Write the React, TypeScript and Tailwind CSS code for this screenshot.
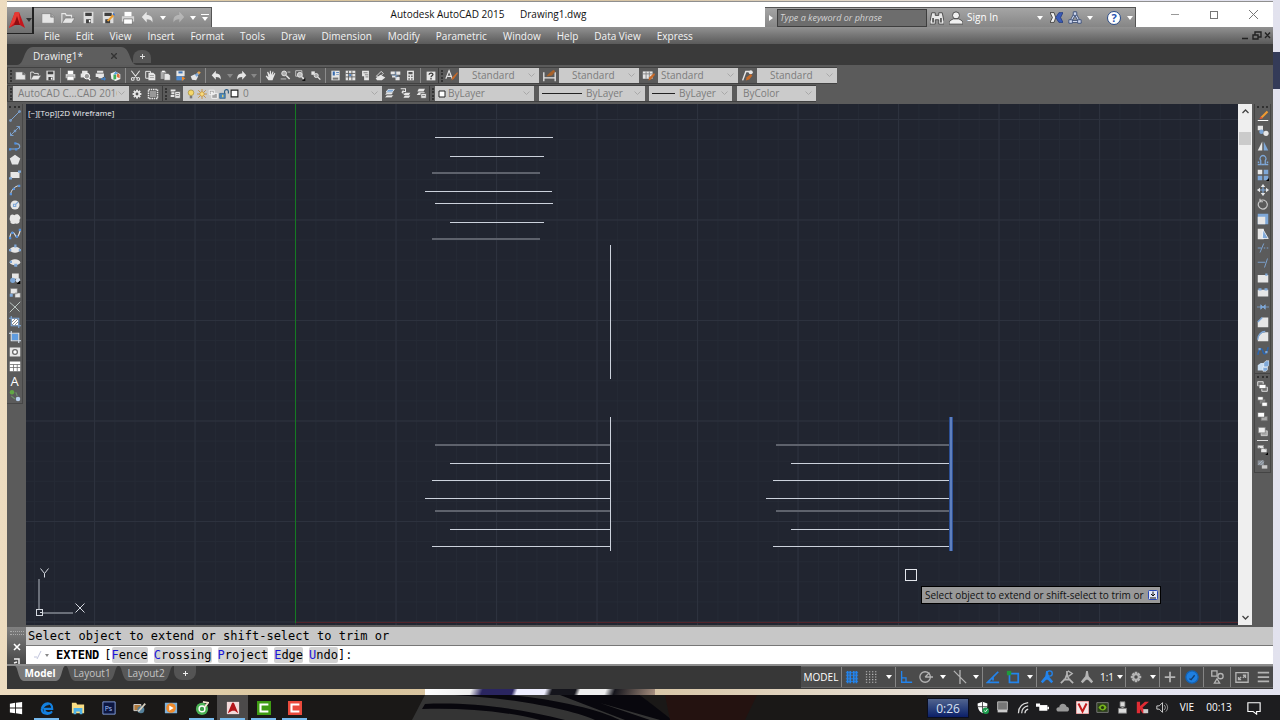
import type { ReactNode } from "react";

const W = "#e6e6e6";
const B = "#7fa8d8";
const D = "#3f3f3f";

function Svg({ size = 13, children }: { size?: number; children: ReactNode }) {
  return (
    <svg width={size} height={size} viewBox="0 0 16 16" fill="none" stroke="none" className="shrink-0" aria-hidden="true">
      {children}
    </svg>
  );
}

const icons: Record<string, ReactNode> = {
  new: <path d="M1 3h10l4 3v8H1z M11 3v4h4" fill={W} stroke="#777" strokeWidth=".7" />,
  open: (
    <>
      <path d="M1 14V3h4l1 2h6v3" stroke={W} strokeWidth="1.3" />
      <path d="M1 14l4-6h11l-4 6z" fill={W} stroke="#666" strokeWidth=".6" />
    </>
  ),
  save: (
    <>
      <path d="M2 1h12v14H2z" fill="#dedede" />
      <path d="M4 2h8v4H4z M5 10h6v5H5z" fill={D} />
      <path d="M8.500 11h2v3h-2z" fill="#fff" />
    </>
  ),
  saveAs: (
    <>
      <path d="M1 1h13v14H1z" fill="#dedede" />
      <path d="M3 2h9v4H3z M4 10h6v5H4z" fill={D} />
      <path d="M6 12l7-8 2 2-7 7z" fill="#f0a030" />
      <path d="M13 4l1-2 2 2-1 2z" fill="#4a78c8" />
    </>
  ),
  print: (
    <>
      <path d="M4 1h8v5H4z" fill="#fff" />
      <path d="M1 6h14v6H1z" fill="#d5d5d5" />
      <path d="M3 9h10v6H3z" fill="#fff" stroke="#666" strokeWidth=".8" />
    </>
  ),
  preview: (
    <>
      <path d="M3 1h8v4H3z M1 5h12v6H1z" fill={W} />
      <circle cx="10" cy="9" r="4" fill="#999" stroke="#fff" strokeWidth="1.400" />
      <path d="M12 12l3 3" stroke="#fff" strokeWidth="2" />
    </>
  ),
  publish: (
    <>
      <path d="M3 1h9v3H3z M1 5h12v5H1z" fill={W} />
      <path d="M5 11h6" stroke={W} strokeWidth="2" />
      <path d="M9 12h4V9l3 4-3 3v-2H9z" fill="#3d7fc8" />
    </>
  ),
  dwf: (
    <>
      <path d="M1 5l7-3 7 4v7l-7 3-6-3z" fill="#f2f2f2" />
      <path d="M5 7l4-1v7l-4 1z" fill="#3fae5a" />
      <path d="M10 4l4 3v5l-4-2z" fill="#e0703a" />
      <path d="M5 7l3-5 4 3z" fill="#5aa0e0" />
    </>
  ),
  cut: <path d="M2 1l9 12M14 1L5 13M2 13a2 2 0 104 0 2 2 0 10-4 0M10 13a2 2 0 104 0 2 2 0 10-4 0" stroke={W} strokeWidth="1.5" />,
  copy: (
    <>
      <path d="M1 2h7v10H1z" stroke={W} strokeWidth="1.400" />
      <path d="M5 4h7l3 3v8H5z" fill={W} />
      <path d="M7 8h6M7 11h6" stroke="#888" />
    </>
  ),
  paste: (
    <>
      <path d="M1 2h8v11H1z" fill="#aaa" />
      <path d="M3 1h4v2H3z" fill="#fff" />
      <path d="M6 5h6l3 3v7H6z" fill={W} stroke="#555" strokeWidth=".8" />
    </>
  ),
  block: (
    <>
      <path d="M2 1h12v8H2z" fill={W} />
      <path d="M5 2h6v3H5z" fill="#3f74b5" />
      <path d="M2 9h11v6H2z" fill="#4d8ad0" />
      <path d="M10 9l5 3-5 4z" fill="#f08a28" />
    </>
  ),
  match: (
    <>
      <path d="M1 9l6-3 5 3-3 6-6-1z" fill={W} />
      <path d="M7 7l5-4 2 2-4 5z" fill={B} />
      <path d="M13 1l1 2 2 1-2 1-1 2-1-2-2-1 2-1z" fill="#f0a848" />
    </>
  ),
  undo: <path d="M7 1v4c5 0 8 3 7 9-1-3-3-4-7-4v4L1 7.500z" fill={W} />,
  redo: <path d="M9 1v4c-5 0-8 3-7 9 1-3 3-4 7-4v4l6-6.500z" fill={W} />,
  pan: <path d="M5 15L1 9l1-1 3 2L3 3l1.500-.5L7 7V1h1.500l.5 6 2-5 1.500.5L11 8l3-4 1 1-3 7-1 3z" fill={W} />,
  zoom: (
    <>
      <circle cx="6" cy="5" r="3.500" fill="#aaa" stroke={W} strokeWidth="1.400" />
      <path d="M9 8l5 5" stroke={W} strokeWidth="2.200" />
      <path d="M1 13h8M11 3h4" stroke={W} />
    </>
  ),
  zoomWin: (
    <>
      <path d="M1 1h9v8H1z" stroke={W} />
      <circle cx="7" cy="7" r="3.500" fill="#bbb" stroke={W} strokeWidth="1.400" />
      <path d="M10 10l4 4" stroke={W} strokeWidth="2.200" />
      <path d="M15 11v5h-5z" fill="#111" />
    </>
  ),
  zoomPrev: (
    <>
      <path d="M2 2h5v5H2z" fill={W} />
      <circle cx="9" cy="8" r="3" fill="#aaa" stroke={W} strokeWidth="1.300" />
      <path d="M11 10l4 4" stroke={W} strokeWidth="2" />
    </>
  ),
  props: (
    <>
      <path d="M2 1h12v14H2z" fill={W} />
      <path d="M4 2h3v6H4z M9 3h4v1H9z M9 6h4v1H9z" fill="#356ab0" />
      <path d="M4 11h8v3H4z" fill="#777" />
    </>
  ),
  center: (
    <>
      <path d="M1 1h14v14H1z" fill={W} />
      <path d="M5 1v14M10 1v14M1 5h14M1 10h14" stroke="#555" strokeWidth="1.200" />
      <path d="M6 6h3v3H6z" fill="#4c82c4" />
    </>
  ),
  palettes: (
    <>
      <path d="M3 1h10v14H6V9H3z" fill={W} />
      <path d="M5 4h6M7 7h5M8 10h4" stroke="#555" />
    </>
  ),
  sheet: (
    <>
      <path d="M1 12l7-5 7 4-5 4H3z" fill={W} />
      <path d="M2 9l7-7 3 3-6 6z" stroke={W} strokeWidth="1.300" />
    </>
  ),
  markup: (
    <>
      <path d="M1 2h6v4H1z M9 2h6v5H9z M3 8h5v3H3z M8 10h6v5H8z" fill={W} />
      <path d="M2 7l11 2M8 2l1 10" stroke={B} />
    </>
  ),
  calc: (
    <>
      <path d="M3 1h10v14H3z" fill={W} />
      <path d="M5 3h6v3H5z M5 8h2v2H5z M9 8h2v2H9z M5 12h2v2H5z M9 12h2v2H9z" fill="#555" />
    </>
  ),
  help: (
    <>
      <path d="M1 1h14v14H1z" fill={W} />
      <path d="M5 6c0-4 7-3 6 0-.5 1.500-3 2-3 4M8 11v2.500" stroke="#333" strokeWidth="2" />
    </>
  ),
  textStyle: (
    <>
      <path d="M1 12L5 2l4 10M3 9h5" stroke={W} strokeWidth="1.400" />
      <path d="M8 14l1-4 6-6 1 1-5 7z" fill="#c86a28" />
    </>
  ),
  dimStyle: (
    <>
      <path d="M1 4v11M15 4v11M1 11h14" stroke={W} strokeWidth="1.600" />
      <path d="M4 9l4-4 5-4 2 2-4 5-4 1z" fill="#a8622a" />
    </>
  ),
  tableStyle: (
    <>
      <path d="M1 3h12v9H1z" fill={W} />
      <path d="M1 6h12M5 3v9M9 3v9" stroke="#777" />
      <path d="M8 14l1-4 6-5 1 2-5 6z" fill="#c86a28" />
    </>
  ),
  leaderStyle: (
    <>
      <path d="M2 14L6 3h4" stroke={W} strokeWidth="1.800" />
      <circle cx="12" cy="4" r="2.500" fill={W} />
      <path d="M6 14l1-4 5-4 2 2-4 5z" fill="#c86a28" />
    </>
  ),
  gear: (
    <>
      <path d="M8 1v14M1 8h14M3 3l10 10M13 3L3 13" stroke={W} strokeWidth="3" />
      <circle cx="8" cy="8" r="5" fill={W} />
      <circle cx="8" cy="8" r="2.300" fill="#555" />
    </>
  ),
  workspace: (
    <>
      <path d="M2 2h12v12H2z" stroke={W} strokeWidth="2" strokeDasharray="2 1" />
      <path d="M4 4h8v8H4z" fill="#999" />
    </>
  ),
  layerProps: (
    <>
      <path d="M1 2h7v3H1z M2 6h5v3H2z M1 10h6v3H1z" fill={W} />
      <path d="M7 5h8v10H7z" fill={W} stroke="#555" />
      <path d="M9 8h4M9 11h4" stroke="#555" />
    </>
  ),
  layers: (
    <>
      <path d="M1 14l3-4h10l-3 4z M1 10l3-4h10l-3 4z" fill={W} stroke="#555" strokeWidth=".8" />
      <path d="M3 6l3-4h9l-3 4z" fill={B} stroke="#fff" />
    </>
  ),
  layerPrev: (
    <>
      <path d="M5 14l2-3h8l-2 3z M5 10l2-3h8l-2 3z" fill={W} />
      <path d="M1 1h7v4H4" stroke={W} strokeWidth="1.500" />
      <path d="M5 2v7L2 6z" fill={W} />
    </>
  ),
  layerState: (
    <>
      <path d="M1 10l3-4h9l-3 4z M2 5l2-4h9l-2 4z" fill={W} />
      <path d="M7 8h8v7H7z" fill={W} stroke="#555" />
      <path d="M9 11h4" stroke="#555" />
    </>
  ),
  bulb: (
    <>
      <circle cx="8" cy="6" r="4.500" fill="#f5d76a" stroke="#9c8430" />
      <path d="M6 11h4v4H6z" fill="#777" />
    </>
  ),
  sun: (
    <>
      <path d="M8 0v16M0 8h16M2 2l12 12M14 2L2 14" stroke="#c08830" strokeWidth="1.300" />
      <circle cx="8" cy="8" r="3.500" fill="#f7dc80" stroke="#c08830" />
    </>
  ),
  freeze: (
    <>
      <path d="M2 2h8v7H2z M6 7h9v8H6z" fill="#a4a4a4" stroke="#f4f4f4" strokeWidth="1.500" />
      <circle cx="6" cy="6" r="2" fill="#f4f4f4" />
    </>
  ),
  lock: (
    <>
      <path d="M1 7h9v8H1z" fill="#4b88bd" stroke="#28587e" />
      <path d="M9 7V4a3 3 0 016 0v3" stroke="#28587e" strokeWidth="1.800" />
      <path d="M5 9h2v4H5z" fill="#f4d060" />
    </>
  ),
  swatch: <path d="M2 2h12v12H2z" fill="#fff" stroke="#222" strokeWidth="2" />,

  line: <path d="M2 14L14 2M1 13h2v2H1z M13 1h2v2h-2z" stroke={B} strokeWidth="1.300" />,
  xline: <path d="M2 14L14 2M2 10v4h4M10 2h4v4M7 7h2v2H7z" stroke={B} strokeWidth="1.200" />,
  pline: (
    <>
      <path d="M1 12h9c6 0 6-8-2-7" stroke={B} strokeWidth="1.500" />
      <path d="M0 11h3v3H0z M8 11h3v3H8z M7 3h3v3H7z" fill="#4f8fe0" />
    </>
  ),
  polygon: <path d="M8 1l7 5-3 8H4L1 6z" fill={W} />,
  rect: (
    <>
      <path d="M2 4h12v8H2z" fill={W} />
      <path d="M0 11h4v3H0z M12 2h4v3h-4z" fill={B} />
    </>
  ),
  arc: (
    <>
      <path d="M2 14C3 8 7 3 14 2" stroke={W} strokeWidth="1.300" />
      <path d="M1 12h3v3H1z M5 5h3v3H5z M12 1h3v3h-3z" fill="#5a94dc" />
    </>
  ),
  circle: (
    <>
      <circle cx="8" cy="8" r="6" fill={W} />
      <path d="M8 8l4-4M6 7h3v3H6z" stroke={B} strokeWidth="1.500" />
    </>
  ),
  cloud: <path d="M2 3c2-2 4-1 5 0 2-2 6-2 7 1 2 2 1 4 0 5 1 4-2 6-5 5-3 1-8 1-7-3-2-2-1-5 0-8z" fill={W} />,
  spline: (
    <>
      <path d="M1 13C3 3 6 5 8 9s4 5 7-6" stroke={W} strokeWidth="1.500" />
      <path d="M0 12h3v3H0z M13 1h3v3h-3z M3 5h3v3H3z M9 10h3v3H9z" fill="#4f8fe0" />
    </>
  ),
  ellipse: (
    <>
      <ellipse cx="8" cy="9" rx="7" ry="4" fill={W} />
      <path d="M0 8h3v3H0z M13 8h3v3h-3z M7 2h3v4H7z" fill={B} />
    </>
  ),
  ellipseArc: (
    <>
      <ellipse cx="8" cy="7" rx="7" ry="4" fill={W} />
      <path d="M1 5h3v3H1z M7 9h4v4H7z" fill={B} />
    </>
  ),
  insert: (
    <>
      <path d="M4 2h9v7H4z" fill={W} />
      <circle cx="5" cy="11" r="3.500" fill={B} />
      <circle cx="12" cy="11" r="3" fill="#d5e2f2" />
      <path d="M15 11v5h-5z" fill="#000" />
    </>
  ),
  makeBlock: (
    <>
      <path d="M2 2h9v7H2z M8 8h7v6H8z" fill={W} stroke="#777" strokeWidth=".7" />
      <path d="M1 9h4v4H1z" fill={B} />
    </>
  ),
  point: <path d="M1 2l7 6M1 15L15 1M8 8l6 6" stroke="#bdc9c4" strokeWidth="1.300" />,
  hatch: (
    <>
      <path d="M3 0v13h13M0 3h13v13" stroke={B} strokeWidth="1.500" />
      <path d="M4 4h8v8H4z" fill="#fff" />
      <path d="M4 8l4-4M4 12l8-8M8 12l4-4" stroke="#666" />
    </>
  ),
  gradient: (
    <>
      <path d="M3 0v13h13M0 3h13v13" stroke="#d8e4f2" strokeWidth="1.500" />
      <path d="M4 4h8v8H4z" fill="#5f9ce0" />
    </>
  ),
  region: (
    <>
      <path d="M1 2h14v12H1z" fill={W} />
      <circle cx="8" cy="8" r="4" fill="#666" />
      <circle cx="8" cy="8" r="2.300" fill="#fff" />
    </>
  ),
  table: (
    <>
      <path d="M1 2h14v13H1z" fill="#fff" />
      <path d="M1 6h14M1 10h14M6 6v9M11 6v9" stroke="#666" />
    </>
  ),
  addSel: (
    <>
      <circle cx="4" cy="3" r="3" fill="#61a844" />
      <circle cx="12" cy="12" r="3" fill="#b8d0ee" />
      <path d="M3 8l5 4M9 3l2 5" stroke="#6d8f6a" strokeWidth="1.500" />
    </>
  ),

  erase: (
    <>
      <path d="M1 14h14" stroke="#fff" strokeWidth="1.300" />
      <path d="M4 12l1-3 8-8 2 2-8 8z" fill="#ef9a32" />
      <path d="M3 12l2-3 3 2z" fill="#d84a38" />
    </>
  ),
  copyObj: (
    <>
      <path d="M1 1h7v6H1z" fill={W} />
      <circle cx="6" cy="9" r="3" fill={B} />
      <circle cx="12" cy="11" r="3.500" fill={W} />
    </>
  ),
  mirror: (
    <>
      <path d="M7 2v12H1z" fill={W} />
      <path d="M9 2v12h6z" fill={B} />
    </>
  ),
  offset: <path d="M1 14h4V9c-3-4 1-7 3-7s6 3 3 7v5h4M1 11h2M13 11h2M6 14h4" stroke={B} strokeWidth="1.700" />,
  array: (
    <>
      <path d="M1 1h6v6H1z" fill={W} />
      <path d="M9 1h6v6H9z M1 9h6v6H1z M9 9h6v6H9z" fill={B} />
      <path d="M16 12v4h-4z" fill="#000" />
    </>
  ),
  move: (
    <>
      <path d="M8 1v14M1 8h14" stroke={B} strokeWidth="1.500" />
      <path d="M8 0l3 4H5zM8 16l3-4H5zM0 8l4-3v6zM16 8l-4-3v6z" fill={W} />
    </>
  ),
  rotate: <path d="M3 5a6 6 0 101-1M4 1v4h4" stroke="#c8c8c8" strokeWidth="1.600" />,
  scale: (
    <>
      <path d="M1 1h14v14H1z" fill={B} />
      <path d="M1 5h10v10H1z" fill={W} />
    </>
  ),
  stretch: (
    <>
      <path d="M1 1h8v14H1z" fill={W} />
      <path d="M8 2l7 12H7z" fill={B} stroke="#fff" />
    </>
  ),
  trim: <path d="M4 14L9 2M1 8h5M9 8h2M13 8h2" stroke={B} strokeWidth="1.200" />,
  extend: <path d="M14 2l-4 12M1 7h10" stroke={B} strokeWidth="1.200" />,
  breakPt: (
    <>
      <path d="M1 4h14v10H1z" fill={W} />
      <path d="M11 2h3v3h-3z" fill={B} />
    </>
  ),
  breakIt: (
    <>
      <path d="M1 5h14v9H1z" fill={W} />
      <path d="M2 3h4v3H2z M10 3h4v3h-4z" fill={B} />
    </>
  ),
  join: <path d="M0 8h16M5 5v6l3-3zM11 5v6L8 8z" fill={B} stroke={B} />,
  chamfer: (
    <>
      <path d="M1 15V8l6-6h8v13z" fill={W} />
      <path d="M1 8l6-6" stroke={B} strokeWidth="2" />
    </>
  ),
  fillet: (
    <>
      <path d="M1 15c0-8 5-12 10-12h4v12z" fill={W} />
      <path d="M1 13C1 6 6 2 11 2" stroke={B} strokeWidth="2" />
    </>
  ),
  blend: (
    <>
      <path d="M1 13C4 1 7 5 8 9s4 5 7-6" stroke="#2a65b0" strokeWidth="2" />
      <path d="M2 4h3v3H2z M11 8h3v3h-3z" fill={B} />
    </>
  ),
  explode: (
    <>
      <path d="M1 7l4-3h6v7l-3 3H1z" fill="#c8dcf0" />
      <path d="M9 4l3-3h4v6l-3 3H9z M8 9h6v4l-2 2H8z" fill={B} stroke="#fff" strokeWidth=".7" />
    </>
  ),
  front: (
    <>
      <path d="M1 1h8v6H1z M7 9h8v6H7z" fill="#777" stroke={W} strokeWidth="1.300" />
      <path d="M3 5h10v6H3z" fill="#fff" stroke="#555" />
    </>
  ),
  back: (
    <>
      <path d="M4 5h8v6H4z" fill="#888" />
      <path d="M1 1h8v5H1z M7 9h8v6H7z" fill="#fff" stroke="#555" />
    </>
  ),
  above: (
    <>
      <path d="M6 8h9v6H6z" fill="#aaa" stroke="#777" />
      <path d="M1 2h10v7H1z" fill="#fff" stroke="#555" />
    </>
  ),
  under: (
    <>
      <path d="M6 7h9v7H6z" fill="#aaa" stroke={W} />
      <path d="M2 2h10v8H2z" fill="#eee" stroke="#777" />
    </>
  ),
  annoFront: (
    <>
      <path d="M1 2h9v4H1z M6 7h8v5H6z" fill={W} />
      <path d="M2 4l4 4M9 3l3 5" stroke="#666" />
      <path d="M16 12v4h-4z" fill="#000" />
    </>
  ),
  hatchBack: (
    <>
      <path d="M1 2h9v7H1z" fill="#8a8f96" />
      <path d="M7 9h8v5H7z" fill="#c8c8c8" />
      <path d="M2 8l6-6M5 9l5-5" stroke="#b8c8d8" />
    </>
  ),
};

function Tool({ name, w = "w-[15px]", size }: { name: string; w?: string; size?: number }) {
  return (
    <button aria-label={name} className={`${w} flex h-full items-center justify-center shrink-0`}>
      <Svg size={size}>{icons[name]}</Svg>
    </button>
  );
}

function Sep() {
  return (
    <div className="w-[5px] h-full flex justify-center shrink-0">
      <div className="w-px bg-[#8b8b8b]" />
    </div>
  );
}

function Grip() {
  return (
    <div className="w-[6px] h-full flex items-center justify-center shrink-0 border-l border-[#3c3c3c]">
      <div className="h-3 border-l-2 border-dotted border-[#333]" />
    </div>
  );
}

function Caret({ w = "w-[9px]", color = "text-white" }: { w?: string; color?: string }) {
  return (
    <span className={`${w} ${color} flex items-center justify-center shrink-0`}>
      <svg width="6" height="4" viewBox="0 0 6 4" fill="currentColor">
        <path d="M0 0h6L3 4z" />
      </svg>
    </span>
  );
}

function Drop({ label, value, w, pad = "pl-[13px]", children }: { label: string; value: string; w: string; pad?: string; children?: ReactNode }) {
  return (
    <label className={`${w} relative h-[15px] flex items-center shrink-0 bg-[#cbcbcb] text-[#7c7c7c] text-[10px]`}>
      {children}
      <select aria-label={label} className={`${pad} appearance-none min-w-0 flex-1 h-full mr-[12px] leading-[15px] bg-transparent outline-none`}>
        <option>{value}</option>
      </select>
      <svg width="7" height="5" viewBox="0 0 7 5" className="absolute right-[4px] top-[5px]" fill="none" stroke="#a8a8a8">
        <path d="M.5.5l3 3 3-3" />
      </svg>
    </label>
  );
}

const menus = ["File", "Edit", "View", "Insert", "Format", "Tools", "Draw", "Dimension", "Modify", "Parametric", "Window", "Help", "Data View", "Express"];

const drawTools = ["line", "xline", "pline", "polygon", "rect", "arc", "circle", "cloud", "spline", "ellipse", "ellipseArc", "insert", "makeBlock", "point", "hatch", "gradient", "region", "table", "text", "addSel"];
const modifyTools = ["erase", "copyObj", "mirror", "offset", "array", "move", "rotate", "scale", "stretch", "trim", "extend", "breakPt", "breakIt", "join", "chamfer", "fillet", "blend", "explode"];

function TitleBar() {
  return (
    <header className="relative flex h-[26px] bg-white border-t border-[#8f8f8f] items-end">
      <button aria-label="Application menu" className="absolute left-0 top-[5px] z-10 w-[27px] h-[27px] flex items-center justify-center bg-linear-to-b from-[#9a9a9a] to-[#6f6f6f] border-r-2 border-b border-[#222]">
        <svg width="18" height="18" viewBox="0 0 18 18">
          <path d="M1 17L7 1h4l6 16-5-3H7z" fill="#c5161c" />
          <path d="M7 1h4l1 13-3-5-8 8z" fill="#e63a34" />
          <path d="M9 5l3 9H6z" fill="#8f0d12" />
        </svg>
        <Caret w="w-[6px]" color="text-[#333]" />
      </button>
      <div className="flex h-[20px] w-[205px] shrink-0 pl-[31px] items-center bg-linear-to-b from-[#a5a5a5] to-[#868686] border-t border-r border-[#555]">
        <Tool name="new" w="w-[20px]" size={14} />
        <Tool name="open" w="w-[20px]" size={14} />
        <Tool name="save" w="w-[20px]" size={13} />
        <Tool name="saveAs" w="w-[20px]" size={13} />
        <Tool name="print" w="w-[20px]" size={14} />
        <Tool name="undo" w="w-[19px]" size={13} />
        <Caret w="w-[12px]" />
        <span className="flex h-full opacity-40">
          <Tool name="redo" w="w-[18px]" size={13} />
        </span>
        <Caret w="w-[12px]" />
        <span className="flex flex-col items-center w-[12px] gap-[2px]">
          <span className="w-[8px] h-px bg-white" />
          <Caret />
        </span>
      </div>
      <h1 className="flex-1 text-center text-[10px] leading-[25px] text-[#111] whitespace-pre">
        Autodesk AutoCAD 2015{"      "}Drawing1.dwg
      </h1>
      <div className="flex h-[20px] w-[371px] shrink-0 items-center bg-linear-to-b from-[#a5a5a5] to-[#868686] border-t border-r border-[#555] text-white">
        <button aria-label="Collapse search" className="w-[12px] flex justify-center">
          <svg width="4" height="6" viewBox="0 0 4 6" fill="#fff">
            <path d="M0 0l4 3-4 3z" />
          </svg>
        </button>
        <input aria-label="Search" placeholder="Type a keyword or phrase" className="w-[150px] h-[18px] px-[2px] text-[9px] italic bg-[#6d6d6d] border border-[#3e3e3e] placeholder:text-[#d4d4d4]" />
        <span className="w-[20px] flex justify-center">
          <Svg size={14}>
            <path d="M2 2h4v3h4V2h4l2 10v3h-6v-5H6v5H0v-3z" fill="#e8e8e8" stroke="#444" />
            <path d="M3.500 8v5M12.500 8v5" stroke="#555" strokeWidth="2" />
          </Svg>
        </span>
        <button className="flex items-center w-[97px] gap-[4px] pl-[2px] text-[10px]">
          <Svg size={14}>
            <circle cx="8" cy="5" r="4" fill="#f1f1f1" stroke="#444" />
            <path d="M0 15c0-5 4-5 5-6h6c1 1 5 1 5 6z" fill="#f1f1f1" stroke="#444" />
          </Svg>
          <span>Sign In</span>
          <span className="ml-auto flex"><Caret /></span>
        </button>
        <span className="w-[20px] pl-[6px] flex">
          <Svg size={13}>
            <path d="M0 2h5l2 6-2 6H0l3-6z" fill="#f2f2f2" stroke="#333" />
            <path d="M16 2h-5L7 8l4 6h5l-3-6z" fill="#3a5bb8" stroke="#243c80" />
          </Svg>
        </span>
        <span className="w-[18px] pl-[4px] flex">
          <Svg size={14}>
            <path d="M8 3L3 12h10z" stroke="#3c4f78" strokeWidth="3" />
            <path d="M8 3L3 12h10z" stroke="#cfd8ee" strokeWidth="1.200" />
            <path d="M6 1h4v4H6zM1 10h4v4H1zM11 10h4v4h-4z" fill="#cfd8ee" stroke="#3c4f78" />
          </Svg>
        </span>
        <Caret w="w-[16px]" />
        <button aria-label="Help" className="ml-auto mr-[3px] w-[14px] h-[14px] rounded-full bg-white border border-[#2a4b88] text-[#2452b0] text-[11px] leading-[12px] font-bold">?</button>
        <Caret w="w-[11px]" />
      </div>
      <div className="flex w-[137px] h-full shrink-0 items-center justify-around pl-[20px] text-[#777]">
        <button aria-label="Minimize"><div className="w-[8px] h-px bg-[#999]" /></button>
        <button aria-label="Maximize"><div className="w-[8px] h-[8px] border border-[#777]" /></button>
        <button aria-label="Close">
          <svg width="9" height="9" viewBox="0 0 9 9" stroke="#777"><path d="M0 0l9 9M9 0L0 9" /></svg>
        </button>
      </div>
    </header>
  );
}

function MenuBar() {
  return (
    <nav className="flex h-[17px] pl-[37px] items-center bg-linear-to-b from-[#929292] to-[#5a5a5a] text-[#f4f4f4] text-[10px] leading-4">
      <div className="flex gap-[16px]">
        {menus.map((m) => (
          <button key={m} className="whitespace-nowrap">{m}</button>
        ))}
      </div>
      <div className="ml-auto mr-[2px]">
        <svg width="30" height="10" viewBox="0 0 30 10" fill="none" stroke="#222" strokeWidth="1.400">
          <path d="M1 7.500h6M12 4h5v4h-5zM14 4V1h6v5h-3M24 1.500l5 5.500M29 1.500l-5 5.500" />
        </svg>
      </div>
    </nav>
  );
}

function FileTabs() {
  return (
    <div className="flex h-[21px] items-end bg-[#3a3a3a] pl-[10px]">
      <div className="relative flex items-center h-[18px] w-[122px] pl-[16px] pr-[22px] text-[10px] text-[#f0f0f0]">
        <svg className="absolute inset-0 w-full h-full" viewBox="0 0 122 18" preserveAspectRatio="none">
          <path d="M0 18c8 0 6-18 16-18h88c10 0 8 18 16 18z" fill="#5e5e5e" />
        </svg>
        <button className="relative">Drawing1*</button>
        <button aria-label="Close tab" className="relative ml-auto">
          <svg width="6" height="6" viewBox="0 0 6 6" stroke="#333" strokeWidth="1.400"><path d="M0 0l6 6M6 0L0 6" /></svg>
        </button>
      </div>
      <button aria-label="New tab" className="-ml-[6px] mb-[2px] w-[18px] h-[13px] flex items-center justify-center rounded-t-lg bg-[#565656] text-[#ddd]">
        <svg width="5" height="5" viewBox="0 0 5 5" stroke="#ddd"><path d="M2.500 0v5M0 2.500h5" /></svg>
      </button>
    </div>
  );
}

function Toolbars() {
  return (
    <div className="flex flex-col h-[39px] gap-[1px] pt-[2px] bg-[#5b5b5b]">
      <div className="flex h-[17px]">
        <div className="flex h-full items-center border-y border-[#414141]">
          <Grip />
          {["new", "open", "save"].map((n) => <Tool key={n} name={n} size={11} />)}
          <Sep />
          {["print", "preview", "publish", "dwf"].map((n) => <Tool key={n} name={n} size={11} />)}
          <Sep />
          {["cut", "copy", "paste", "block", "match"].map((n) => <Tool key={n} name={n} size={11} />)}
          <Sep />
          <Tool name="undo" size={11} w="w-[17px]" />
          <Caret color="text-[#888]" />
          <Tool name="redo" size={11} />
          <Caret color="text-[#888]" />
          <Sep />
          {["pan", "zoom", "zoomWin", "zoomPrev"].map((n) => <Tool key={n} name={n} size={11} />)}
          <Sep />
          {["props", "center", "palettes", "sheet", "markup", "calc"].map((n) => <Tool key={n} name={n} size={11} />)}
          <Sep />
          <Tool name="help" size={10} />
          <Grip />
          <Tool name="textStyle" w="w-[15px]" />
          <Drop label="Text style" value="Standard" w="w-[80px]" />
          <Tool name="dimStyle" w="w-[20px]" />
          <Drop label="Dimension style" value="Standard" w="w-[80px]" />
          <Tool name="tableStyle" w="w-[19px]" />
          <Drop label="Table style" value="Standard" w="w-[80px]" pad="pl-[3px]" />
          <Tool name="leaderStyle" w="w-[19px]" />
          <Drop label="Multileader style" value="Standard" w="w-[80px]" />
        </div>
      </div>
      <div className="flex h-[17px]">
        <div className="flex h-full items-center border-y border-[#414141]">
          <Grip />
          <Drop label="Workspace" value="AutoCAD C...CAD 2016" w="w-[116px]" pad="pl-[5px]" />
          <Tool name="gear" w="w-[16px]" size={10} />
          <Tool name="workspace" size={12} />
          <span className="w-[2px]" />
          <Grip />
          <Tool name="layerProps" size={11} />
          <Drop label="Layer" value="0" w="w-[199px]" pad="pl-[4px]">
            <span className="flex items-center gap-[1px] pl-[3px]">
              {["bulb", "sun", "freeze", "lock"].map((n) => <Svg key={n} size={10}>{icons[n]}</Svg>)}
              <Svg size={9}>{icons.swatch}</Svg>
            </span>
          </Drop>
          <Tool name="layers" size={11} />
          <Tool name="layerPrev" size={11} w="w-[16px]" />
          <Tool name="layerState" size={11} w="w-[16px]" />
          <Grip />
          <Drop label="Color" value="ByLayer" w="w-[99px]" pad="pl-[2px]">
            <span className="pl-[3px]"><Svg size={8}>{icons.swatch}</Svg></span>
          </Drop>
          <span className="w-[5px]" />
          <Drop label="Linetype" value="ByLayer" w="w-[106px]" pad="pl-[4px]">
            <span className="ml-[3px] w-[40px] h-px bg-[#222]" />
          </Drop>
          <span className="w-[4px]" />
          <Drop label="Lineweight" value="ByLayer" w="w-[83px]" pad="pl-[4px]">
            <span className="ml-[3px] w-[23px] h-px bg-[#222]" />
          </Drop>
          <span className="w-[5px]" />
          <Drop label="Plot style" value="ByColor" w="w-[79px]" pad="pl-[6px]" />
        </div>
      </div>
    </div>
  );
}

// x, y, width, faint
const topLines = [
  [409, 33, 118, 0], [424, 52, 94, 0], [406, 68, 108, 1], [399, 87, 127, 0],
  [409, 99, 118, 0], [424, 118, 94, 0], [406, 134, 108, 1],
];
// x, y, faint: all of these run up to the boundary edge
const extended = [
  [409, 340, 1], [424, 359, 0], [406, 376, 0], [399, 394, 0], [409, 406, 1], [424, 425, 0], [406, 442, 0],
];

function Drawing() {
  return (
    <div className="relative flex-1 min-w-0 overflow-hidden bg-[#212530]">
      <svg className="absolute inset-0 w-full h-full" shapeRendering="crispEdges" fill="none">
        <defs>
          <pattern id="minor" x="8" y="15" width="20.1" height="20.1" patternUnits="userSpaceOnUse">
            <path d="M.5 0v21M0 .5h21" stroke="#252a35" />
          </pattern>
          <pattern id="major" x="68" y="15" width="100.5" height="100.5" patternUnits="userSpaceOnUse">
            <path d="M.5 0v101M0 .5h101" stroke="#2d323e" />
          </pattern>
        </defs>
        <rect width="100%" height="100%" fill="url(#minor)" />
        <rect width="100%" height="100%" fill="url(#major)" />
        <rect x="269" y="0" width="1" height="519" fill="#157a22" />
        <rect x="270" y="518" width="100%" height="1" fill="#52242b" />
        {topLines.map(([x, y, w, faint], i) => (
          <rect key={i} x={x} y={y} width={w} height={faint ? 2 : 1} fill={faint ? "#5e626c" : "#ccd2dc"} />
        ))}
        {[0, 341].map((dx) =>
          extended.map(([x, y, faint], i) => (
            <rect key={`${dx}-${i}`} x={x + dx} y={y} width={584 - x} height={faint ? 2 : 1} fill={faint ? "#5e626c" : "#ccd2dc"} />
          ))
        )}
        <path d="M584.500 141v134M584.500 313v134" stroke="#ccd2dc" />
        <path d="M925 313v134" stroke="#2c4f94" strokeWidth="4" />
        <path d="M925 313v134" stroke="#5f80bd" strokeWidth="2" />
        <path d="M13 475v30M17 509h30" stroke="#6a6f79" strokeWidth="2" />
        <path d="M10.500 505.500h6v6h-6zM13.500 508.500h3" stroke="#d5d9e0" />
        <g stroke="#d5d9e0" shapeRendering="auto">
          <path d="M14.500 464.500l4 5v4M22.500 464.500l-4 5M49.500 499.500l9 9M58.500 499.500l-9 9" />
        </g>
        <path d="M879.500 465.500h11v11h-11z" stroke="#e3e6ec" />
      </svg>
      <p className="absolute left-[2px] top-[3px] text-[8px] leading-[12px] text-[#f0f2f5]">[−][Top][2D Wireframe]</p>
      <div className="absolute left-[895px] top-[482px] flex items-center h-[18px] pl-[3px] pr-[2px] gap-[4px] bg-[#999] border border-black text-[10px] text-[#111] whitespace-nowrap">
        Select object to extend or shift-select to trim or
        <svg width="10" height="10" viewBox="0 0 10 10" fill="none" stroke="#2949b8">
          <rect x=".5" y=".5" width="9" height="9" rx="1" fill="#e2e8fa" />
          <path d="M5 1.500v4M3 4l2 2 2-2M2 8h6" stroke="#111" />
        </svg>
      </div>
    </div>
  );
}

function SideHandle() {
  return <div className="h-[5px] w-[11px] mx-auto flex items-center"><div className="w-full border-t-2 border-dotted border-[#303030]" /></div>;
}

function Workspace() {
  return (
    <main className="flex flex-1 min-h-0 bg-[#5b5b5b]">
      <aside className="w-[19px] shrink-0 pr-[3px]">
        <div className="border-r border-b border-[#474747]">
          <SideHandle />
          <div className="flex flex-col h-[294px]">
            {drawTools.map((n) => (
              <button key={n} aria-label={n} className="flex-1 min-h-0 flex items-center justify-center text-white text-[13px] leading-none">
                {n === "text" ? "A" : <Svg size={12}>{icons[n]}</Svg>}
              </button>
            ))}
          </div>
        </div>
      </aside>
      <Drawing />
      <div className="w-[14px] shrink-0 flex flex-col items-center justify-between bg-[#efefef] py-[5px]">
        <div className="flex flex-col items-center gap-[18px]">
          <svg width="7" height="5" viewBox="0 0 7 5" fill="none" stroke="#444" strokeWidth="1.300"><path d="M.5 4l3-3 3 3" /></svg>
          <div className="w-[12px] h-[13px] bg-[#cbcbcb]" />
        </div>
        <svg width="7" height="5" viewBox="0 0 7 5" fill="none" stroke="#444" strokeWidth="1.300"><path d="M.5 1l3 3 3-3" /></svg>
      </div>
      <aside className="w-[21px] shrink-0 px-[2px]">
        <div className="border-x border-b border-[#444]">
          <SideHandle />
          <div className="flex flex-col h-[264px]">
            {modifyTools.map((n) => (
              <button key={n} aria-label={n} className="flex-1 min-h-0 flex items-center justify-center"><Svg size={12}>{icons[n]}</Svg></button>
            ))}
          </div>
        </div>
        <div className="border-x border-b border-[#444]">
          <SideHandle />
          {["front", "back", "above", "under"].map((n) => (
            <button key={n} aria-label={n} className="w-full h-[15px] flex items-center justify-center"><Svg size={11}>{icons[n]}</Svg></button>
          ))}
          <div className="h-px mx-[2px] my-[1px] bg-[#ddd]" />
          {["annoFront", "hatchBack"].map((n) => (
            <button key={n} aria-label={n} className="w-full h-[15px] flex items-center justify-center"><Svg size={11}>{icons[n]}</Svg></button>
          ))}
        </div>
      </aside>
    </main>
  );
}

function CommandLine() {
  return (
    <section className="flex h-[41px] border-t-2 border-[#5b5b5b] border-b-2 border-b-[#8d8d8d] bg-[#4b4b4b]">
      <div className="w-[19px] shrink-0 flex flex-col items-center justify-between pt-[4px] overflow-hidden bg-linear-to-b from-[#808080] to-[#484848]">
        <div className="w-[14px] h-[4px] border-y border-dotted border-[#aaa]" />
        <svg width="8" height="8" viewBox="0 0 8 8" stroke="#fff" strokeWidth="1.600"><path d="M1 1l6 6M7 1L1 7" /></svg>
        <svg width="8" height="6" viewBox="0 0 8 6" fill="none" stroke="#eee" strokeWidth="1.500"><path d="M1 1h5v5M1 5l3-1" /></svg>
      </div>
      <div className="flex-1 flex flex-col font-['DejaVu_Sans_Mono','Liberation_Mono',monospace] text-[12px] text-black">
        <p className="h-[19px] pl-[2px] leading-[19px] bg-[#c7c7c7] border-b border-[#777]">Select object to extend or shift-select to trim or</p>
        <div className="flex-1 flex items-center pl-[8px] bg-white whitespace-pre">
          <svg width="16" height="10" viewBox="0 0 16 10" className="mr-[6px]" fill="none" stroke="#c0c4dc">
            <path d="M0 7h3M3 9l4-8" />
            <path d="M11 4h4l-2 3z" fill="#888" stroke="none" />
          </svg>
          <b>EXTEND</b>
          <span className="pl-[5px]">[</span>
          <div className="flex gap-[6px]">
            {["Fence", "Crossing", "Project", "Edge", "Undo"].map((o) => (
              <button key={o} className="h-[16px] leading-[16px] rounded-xs bg-[#d2d2d2]">
                <span className="text-[#1a16d8]">{o[0]}</span>{o.slice(1)}
              </button>
            ))}
          </div>
          <span>]:</span>
          <input aria-label="Command" className="flex-1 h-full outline-none" />
        </div>
      </div>
    </section>
  );
}

function LayoutTab({ label, w, active }: { label: string; w: string; active?: boolean }) {
  return (
    <button className={`${w} ${active ? "font-bold text-white" : "text-[#c4c4c4]"} relative h-[15px] flex items-center justify-center text-[10px]`}>
      <svg className="absolute inset-0 w-full h-full" viewBox="0 0 50 15" preserveAspectRatio="none">
        <path d="M0 0h50c-3 0-3 15-9 15H9C3 15 3 0 0 0z" fill={active ? "#7a7a7a" : "#585858"} />
      </svg>
      <span className="relative">{label}</span>
    </button>
  );
}

function Stat({ w = "w-[20px]", label, color = "#b4b4b4", children }: { w?: string; label: string; color?: string; children: ReactNode }) {
  return (
    <button aria-label={label} className={`${w} h-full flex items-center justify-center shrink-0`}>
      <svg width="14" height="14" viewBox="0 0 16 16" fill="none" stroke={color} strokeWidth="1.500">{children}</svg>
    </button>
  );
}

function StatSep() {
  return <div className="w-px h-full bg-[#858585] shrink-0" />;
}

const BLUE = "#2384ec";
const figure = "M8 1v5M8 5l-2 5-5 5M8 5l2 5 5 5M4 11h8";
const person = "M7 1h2l1 6 5 6-2 2-4-4H7l-4 4-2-2 5-6z";

function StatusBar() {
  return (
    <footer className="flex h-[23px] bg-[#373737] text-white">
      <div className="flex items-start pl-[8px] gap-[1px]">
        <LayoutTab label="Model" w="w-[50px]" active />
        <LayoutTab label="Layout1" w="w-[52px]" />
        <LayoutTab label="Layout2" w="w-[54px]" />
        <button aria-label="New layout" className="w-[22px] h-[14px] flex items-center justify-center bg-[#545454] rounded-b-lg">
          <svg width="5" height="5" viewBox="0 0 5 5" stroke="#eee"><path d="M2.500 0v5M0 2.500h5" /></svg>
        </button>
      </div>
      <div className="ml-auto flex h-[22px] items-center bg-[#4b4b4b] border-y border-[#666]">
        <button className="w-[40px] text-[10px] text-center">MODEL</button>
        <StatSep />
        <Stat label="Grid" color={BLUE}><path d="M3 1v14M6 1v14M10 1v14M13 1v14" strokeWidth="2" /><path d="M1 3h14M1 6h14M1 10h14M1 13h14" strokeWidth="1" /></Stat>
        <Stat label="Snap"><path d="M1 2h14M1 5h14M1 8h14M1 11h14M1 14h14" strokeDasharray="1.500 2" strokeWidth="1.200" /></Stat>
        <Caret w="w-[13px]" />
        <StatSep />
        <Stat label="Ortho" color={BLUE}><path d="M3 1v13h12M3 9h5v5" /></Stat>
        <Stat label="Polar"><circle cx="7" cy="8" r="6" /><path d="M7 8h9M7 8l5-5" /></Stat>
        <Caret w="w-[13px]" />
        <Stat label="Isometric" w="w-[21px]"><path d="M8 0v16M1 1l14 14" /></Stat>
        <Caret w="w-[12px]" />
        <StatSep />
        <Stat label="Tracking" color={BLUE}><path d="M14 2L2 14h13M8 8v4" strokeWidth="2" /></Stat>
        <Stat label="Object snap" color={BLUE}><path d="M4 4h10v10H4z" strokeWidth="2" /><path d="M1 1h5v5H1z" fill="#1f9a3c" stroke="none" /></Stat>
        <Caret w="w-[13px]" />
        <StatSep />
        <Stat label="Annotation visibility" color={BLUE}><path d={person} fill={BLUE} stroke="none" /><circle cx="11" cy="4" r="3" /></Stat>
        <Stat label="Auto scale"><path d={figure} strokeWidth="2" /><path d="M9 1l5 3-4 3" /></Stat>
        <Stat label="Annotation scale"><path d={person} fill="#b4b4b4" stroke="none" /></Stat>
        <button className="w-[28px] flex items-center justify-end text-[10px]">1:1<Caret w="w-[11px]" /></button>
        <StatSep />
        <Stat label="Settings">
          <path d="M8 2v12M2 8h12M4 4l8 8M12 4l-8 8" strokeWidth="3" />
          <circle cx="8" cy="8" r="2" fill="#4b4b4b" stroke="none" />
        </Stat>
        <Caret w="w-[13px]" />
        <StatSep />
        <Stat label="Monitor"><path d="M8 2v12M2 8h12" strokeWidth="2" /></Stat>
        <StatSep />
        <Stat label="Performance" w="w-[22px]" color="#1264b8"><circle cx="8" cy="8" r="7" fill="#1f7fe0" /><path d="M5 10l2 1 4-5" stroke="#123e70" /></Stat>
        <StatSep />
        <Stat label="Isolate" w="w-[26px]"><path d="M2 1h6v6H2zM5 15l3-5 3 5z" /><circle cx="12" cy="7" r="3" /></Stat>
        <StatSep />
        <Stat label="Clean screen" w="w-[21px]"><path d="M1 3h14v11H1zM4 11l3-3M4 8v3h3M12 6L9 9M12 9V6H9" /></Stat>
        <Stat label="Customize" w="w-[21px]"><path d="M2 3h13M2 8h13M2 13h13" strokeWidth="2" /></Stat>
      </div>
    </footer>
  );
}

const apps: { name: string; open?: boolean; active?: boolean; art: ReactNode }[] = [
  { name: "Start", art: <path d="M1 3l6-1v5.500H1zM8 2l7-1v6.500H8zM1 8.500h6V14l-6-1zM8 8.500h7V15l-7-1z" fill="#fff" /> },
  { name: "Edge", open: true, art: <path d="M14 12c-4 3-9 2-9-3h9c0-9-10-8-12 0 2-4 6-6 8-5M2 9c0 6 7 7 11 4" stroke="#1380e0" strokeWidth="2.400" /> },
  { name: "Explorer", art: <><path d="M1 2h5l1 2h8v10H1z" fill="#f8dc84" /><path d="M3 8h10v7h-3v-3H6v3H3z" fill="#4fb2e8" /></> },
  { name: "Photoshop", art: <><path d="M1 1h14v14H1z" fill="#0c1640" stroke="#8ba8e8" /><text x="3" y="11" fontSize="8" fill="#a6c4ff" fontFamily="Open Sans, sans-serif">Ps</text></> },
  { name: "Media", art: <><path d="M1 4h8v7H1z" fill="#b07a3c" stroke="#ddd" /><circle cx="9" cy="10" r="4" fill="#55809a" /><path d="M6 12l8-9" stroke="#d8d0c0" strokeWidth="2" /></> },
  { name: "Player", art: <><path d="M1 2h14v12H1z" fill="#7eb2dc" /><circle cx="8" cy="8" r="5.500" fill="#ef8a2b" /><path d="M6 5l5 3-5 3z" fill="#fff" /></> },
  { name: "Browser", open: true, art: <><circle cx="8" cy="9" r="7" fill="#4bb255" /><circle cx="8" cy="9" r="3.300" fill="#3c9c48" stroke="#fff" strokeWidth="1.600" /><path d="M9 1l6 1-4 5" stroke="#f4e6d0" strokeWidth="2" /></> },
  { name: "AutoCAD", open: true, active: true, art: <><path d="M1 1h14v14H1z" fill="#f3dada" /><path d="M2 14L7 2h2l5 12-4-3H7z" fill="#b3141a" /></> },
  { name: "Camtasia", open: true, art: <><path d="M0 0h16v16H0z" fill="#3f9c14" /><path d="M13 4H4v8h9" stroke="#fff" strokeWidth="2.400" /></> },
  { name: "Recorder", open: true, art: <><path d="M0 0h16v16H0z" fill="#ea4a3c" /><path d="M13 4H4v8h9" stroke="#fff" strokeWidth="2.400" /></> },
];

const tray: { name: string; art: ReactNode }[] = [
  { name: "Defender", art: <><path d="M8 1l6 2c0 6-1 9-6 12C3 12 2 9 2 3z" fill="#fff" /><path d="M8 1v13M2 7h12" stroke="#333" /><circle cx="12" cy="12" r="4" fill="#1c9c4c" /><path d="M10 12l2 1 2-3" stroke="#fff" /></> },
  { name: "Drive", art: <><path d="M2 1h12v10H2z" fill="#777" stroke="#ccc" /><path d="M2 11h12v3H2z" fill="#ccc" /></> },
  { name: "Wi-Fi", art: <path d="M3 15C3 8 7 3 15 2M7 15c0-5 3-8 8-9M11 15c0-3 1-4 4-5" stroke="#ddd" strokeWidth="1.500" /> },
  { name: "Battery", art: <><path d="M4 5h10v7H4z" fill="#fff" /><path d="M14 7h2v3h-2zM0 3h5v4H0z" fill="#fff" /></> },
  { name: "OneDrive", art: <path d="M2 13c-3-2-1-6 2-5 0-6 8-6 9-1 4 0 4 6 0 6z" fill="#999" /> },
  { name: "Unikey", art: <><path d="M0 0h16v16H0z" fill="#f4e8e8" stroke="#c44" /><path d="M3 3l5 10 5-10" stroke="#c41c1c" strokeWidth="2.500" /></> },
  { name: "Nvidia", art: <><path d="M1 2h14v12H1z" fill="#2c3d1c" stroke="#888" /><path d="M3 8c3-5 8-5 10 0-2 5-7 5-10 0z" fill="#76b41c" /><circle cx="8" cy="8" r="2" fill="#24360f" /></> },
  { name: "Network", art: <path d="M5 1h6v6H5zM3 9h10v6H3zM7 7h2v2H7z" fill="#ddd" stroke="#777" /> },
  { name: "Kaspersky", art: <><path d="M1 1h4v5l6-5h5L8 8l5 7H8l-3-5v5H1z" fill="#e02c34" /><path d="M9 10h6v5H9z" fill="#ccc" /></> },
  { name: "Volume", art: <><path d="M1 6h3l4-4v12l-4-4H1z" stroke="#eee" /><path d="M10 5c2 2 2 4 0 6M12 3c3 3 3 7 0 10" stroke="#bbb" /></> },
];

function Taskbar() {
  return (
    <div className="flex h-[25px] shrink-0 bg-[#1a1817] text-white text-[10px]">
      <div className="flex">
        {apps.map((a) => (
          <button key={a.name} aria-label={a.name} className={`${a.active ? "bg-[#4c4a4a]" : ""} relative w-[31px] flex items-center justify-center`}>
            <Svg size={14}>{a.art}</Svg>
            {a.open && <span className="absolute bottom-0 inset-x-[3px] h-[2px] bg-[#76b9ed]" />}
          </button>
        ))}
      </div>
      {/* wallpaper showing through the translucent bar */}
      <svg className="flex-1 min-w-0 h-full" viewBox="310 0 617 25" preserveAspectRatio="none">
        <path d="M425 0h215l30 25H412z" fill="#343434" />
        <path d="M425 9c40-2 90 3 140 16h-25c-40-10-80-12-118-11zM455 0c50 3 110 12 140 25h25C600 15 560 5 510 0zM560 0l65 25h25L600 8l60 17h12L640 0z" fill="#08070d" />
        <path d="M665 0h92l-12 25h-75z" fill="#241210" />
      </svg>
      <div className="flex items-center pr-[9px] bg-[#1d1d1f]">
        <span className="w-[42px] h-[20px] leading-[19px] text-center bg-linear-to-b from-[#52648e] to-[#0c1e68] border border-[#0b0f20] text-[#d8e0f0] text-[12px]">0:26</span>
        <div className="flex pl-[3px]">
          {tray.map((t) => (
            <button key={t.name} aria-label={t.name} className="w-[20px] flex justify-center"><Svg size={13}>{t.art}</Svg></button>
          ))}
        </div>
        <button className="w-[30px] text-center">VIE</button>
        <time className="w-[34px] text-center">00:13</time>
        <button aria-label="Notifications" className="w-[35px] flex justify-center">
          <Svg size={14}><path d="M1 2h14v10h-4v3l-4-3H1z" stroke="#fff" strokeWidth="1.300" /></Svg>
        </button>
      </div>
    </div>
  );
}

export default function App() {
  return (
    <div className="h-screen flex flex-col overflow-hidden bg-[linear-gradient(90deg,#eddcc0_0%,#d9c49c_25%,#d8c5a5_50%,#e5dcd0_70%,#e6e6f2_80%,#e2e2ee_100%)] font-['Open_Sans','Noto_Sans',sans-serif]">
      <div className="relative flex-1 min-h-0 flex flex-col pt-px pl-[7px] pr-[7px] pb-[6px]">
        <div className="absolute bottom-0 left-[425px] w-[230px] h-[6px] bg-[linear-gradient(110deg,#fff_0%,#eee_20%,#2a2560_25%,#2a2560_38%,#eef_40%,#eef_52%,#15151c_55%,#15151c_65%,#eee_67%,#eee_78%,#15151c_82%,#a89080_100%)]" />
        <div className="absolute right-0 top-[52px] w-[7px] h-[37px] bg-[#343b58]" />
        <div className="relative flex-1 min-h-0 flex flex-col">
          <TitleBar />
          <MenuBar />
          <FileTabs />
          <Toolbars />
          <Workspace />
          <CommandLine />
          <StatusBar />
        </div>
      </div>
      <Taskbar />
    </div>
  );
}
